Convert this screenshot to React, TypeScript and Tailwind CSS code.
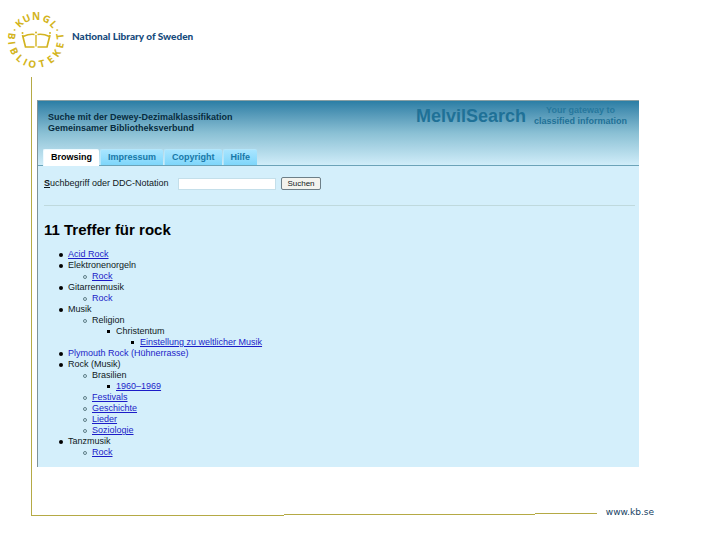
import { clsx } from "clsx";

interface Entry {
  label: string;
  href?: string;
  plain?: boolean;
  children?: Entry[];
}

const results: Entry[] = [
  { label: "Acid Rock", href: "#acid-rock" },
  { label: "Elektronenorgeln", children: [{ label: "Rock", href: "#orgeln-rock" }] },
  { label: "Gitarrenmusik", children: [{ label: "Rock", href: "#gitarre-rock", plain: true }] },
  {
    label: "Musik",
    children: [
      {
        label: "Religion",
        children: [
          {
            label: "Christentum",
            children: [{ label: "Einstellung zu weltlicher Musik", href: "#weltliche-musik" }],
          },
        ],
      },
    ],
  },
  { label: "Plymouth Rock (Hühnerrasse)", href: "#plymouth-rock", plain: true },
  {
    label: "Rock (Musik)",
    children: [
      { label: "Brasilien", children: [{ label: "1960–1969", href: "#1960-1969" }] },
      { label: "Festivals", href: "#festivals" },
      { label: "Geschichte", href: "#geschichte" },
      { label: "Lieder", href: "#lieder" },
      { label: "Soziologie", href: "#soziologie" },
    ],
  },
  { label: "Tanzmusik", children: [{ label: "Rock", href: "#tanz-rock" }] },
];

const tabs = ["Browsing", "Impressum", "Copyright", "Hilfe"];

// [letter, rotation around the emblem's centre]
const upperLetters: [string, number][] = [
  ["·", -65], ["K", -45], ["U", -24], ["N", 0], ["G", 27], ["L", 48], ["·", 65],
];
const lowerLetters: [string, number][] = [
  ["B", 99], ["I", 83], ["B", 63], ["L", 42], ["I", 26], ["O", 9],
  ["T", -14], ["E", -37], ["K", -57], ["E", -77], ["T", -99],
];

function Emblem() {
  return (
    <svg
      viewBox="-30 -30 60 60"
      className="h-[60px] w-[60px] shrink-0 fill-[#d3b420] font-['Open_Sans',sans-serif] text-[10px] font-bold"
      role="img"
      aria-label="Kungl. Biblioteket"
    >
      {upperLetters.map(([letter, angle]) => (
        <text key={angle} y={-20} textAnchor="middle" transform={`rotate(${angle})`}>
          {letter}
        </text>
      ))}
      {lowerLetters.map(([letter, angle]) => (
        <text key={angle} y={28} textAnchor="middle" transform={`rotate(${angle})`}>
          {letter}
        </text>
      ))}
      {/* Open book with crown points */}
      <g fill="none" stroke="#d3b420" strokeWidth="1.7">
        <path d="M-13.500 -5 L-10.500 7 H-1.500 M1.500 7 H11 L14 -5" />
        <path d="M-13 -3.500 Q-6 -6.500 -1.500 -5.500 M1.500 -5.500 Q7 -6.500 13.500 -3.500" />
        <path d="M0 -5 V6.500" strokeWidth="1.400" />
      </g>
      <circle cx="-13.500" cy="-7" r="1" />
      <circle cx="14" cy="-7" r="1" />
      <circle cx="0" cy="-7.500" r="1" />
    </svg>
  );
}

const markers = [
  "size-1 rounded-full bg-black",
  "size-1 rounded-full border border-[#5f7f88]",
  "size-[3px] bg-black",
];

function ResultList({ entries, depth = 0 }: { entries: Entry[]; depth?: number }) {
  return (
    <ul className="pl-6">
      {entries.map((entry) => (
        <li key={entry.label}>
          <div className="relative">
            <span
              className={clsx("absolute top-1 -left-[9px]", markers[Math.min(depth, 2)])}
            />
            {entry.href ? (
              <a
                href={entry.href}
                className={clsx("text-[#1c1cc8]", !entry.plain && "underline")}
              >
                {entry.label}
              </a>
            ) : (
              entry.label
            )}
          </div>
          {entry.children && <ResultList entries={entry.children} depth={depth + 1} />}
        </li>
      ))}
    </ul>
  );
}

function SearchPanel() {
  return (
    <section className="border-t border-l border-t-[#8aa0a4] border-l-[#7e9299] bg-[#d4effb] pb-[9px] font-['Liberation_Sans',Arial,sans-serif] text-[9px] leading-[11px] text-[#10181c]">
      <header className="border-b border-[#6ba3b8] bg-linear-to-b from-[#2a7ea5] via-[#8ac0d4] to-[#d0edf9]">
        <div className="flex h-12 items-start justify-between pr-3 pl-[10px]">
          <h1 className="pt-[11px] font-bold text-[#062c40]">
            Suche mit der Dewey-Dezimalklassifikation
            <br />
            Gemeinsamer Bibliotheksverbund
          </h1>
          <div className="flex gap-2 font-bold text-[#1f7197]">
            <span className="pt-[5px] text-[18px] leading-5">MelvilSearch</span>
            <span className="pt-1 text-center">
              <span className="text-[#27789d]">Your gateway to</span>
              <br />
              classified information
            </span>
          </div>
        </div>
        <nav className="flex gap-px pl-[5px]">
          {tabs.map((tab, i) => (
            <a
              key={tab}
              href={`#${tab.toLowerCase()}`}
              aria-current={i === 0 ? "page" : undefined}
              className={clsx(
                "rounded-t-xs border-t border-l px-[7px] pt-[2px] pb-[2px] font-bold",
                i === 0
                  ? "-mb-px border-[#eefaff] bg-white text-black"
                  : "border-[#b4e6fb] bg-linear-to-b from-[#a8e5ff] to-[#7ed6fb] text-[#1778a8]",
              )}
            >
              {tab}
            </a>
          ))}
        </nav>
      </header>

      <form
        className="flex items-center pt-[11px] pl-[6px]"
        onSubmit={(e) => e.preventDefault()}
      >
        <label htmlFor="query" className="min-w-[132px]">
          <span className="font-bold underline">S</span>uchbegriff oder DDC-Notation
        </label>
        <input
          id="query"
          type="text"
          accessKey="s"
          className="ml-[2px] h-3 w-[98px] border border-[#c4dfea] bg-white px-1"
        />
        <button
          type="submit"
          className="ml-[5px] h-[13px] w-10 rounded-xs border border-[#6d7f88] bg-[#f3f3ee] text-[8px] leading-[10px]"
        >
          Suchen
        </button>
      </form>
      <hr className="mt-[15px] mr-1 ml-[6px] border-[#bfd9dd]" />

      <h2 className="mt-4 mb-[11px] pl-[6px] text-[15px] leading-4 font-bold text-black">
        11 Treffer für rock
      </h2>
      <div className="pl-[6px]">
        <ResultList entries={results} />
      </div>
    </section>
  );
}

export default function App() {
  return (
    <div className="min-h-screen bg-white">
      <header className="flex h-[77px] items-start gap-[6px] pt-[10px] pl-[6px]">
        <Emblem />
        <p className="pt-5 font-['Lato',sans-serif] text-[10px] leading-3 font-black text-[#164a7c]">
          National Library of Sweden
        </p>
      </header>

      <main className="ml-[31px] border-l border-[#b5aa45] pt-[23px] pr-[81px] pb-[49px] pl-[5px]">
        <SearchPanel />
      </main>

      <footer className="-mt-[3px] flex items-start pr-[66px] pl-[31px]">
        <div className="mt-[2px] h-px w-[253px] bg-[#b5aa45]" />
        <div className="mt-px h-px grow bg-[#b5aa45]" />
        <div className="h-px w-[62px] bg-[#b5aa45]" />
        <a
          href="#kb"
          className="-mt-[7px] ml-[9px] font-['DejaVu_Sans',Verdana,sans-serif] text-[9px] leading-3 text-[#173f63]"
        >
          www.kb.se
        </a>
      </footer>
    </div>
  );
}
